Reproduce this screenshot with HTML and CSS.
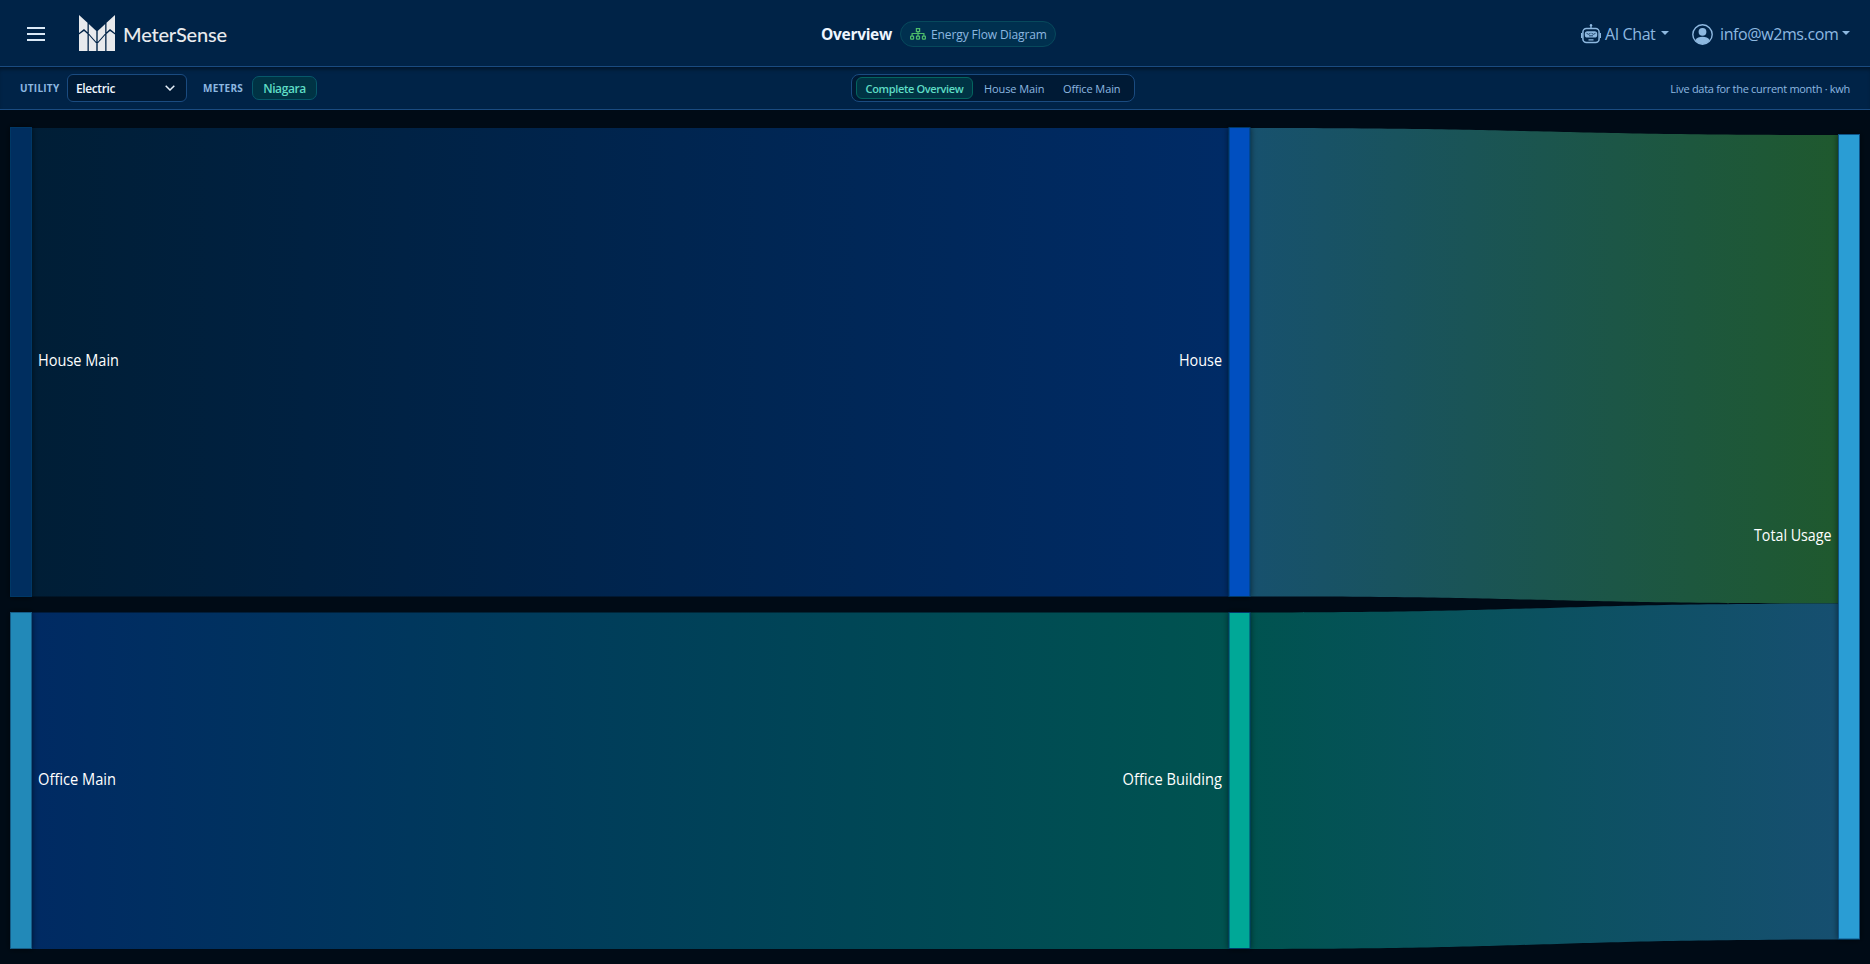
FILE: index.html
```html
<!DOCTYPE html>
<html lang="en">
<head>
    <meta charset="UTF-8">
    <meta name="viewport" content="width=device-width, initial-scale=1.0">
    <title>MeterSense - Overview</title>
    <link rel="stylesheet" href="styles.css">
</head>
<body>
    <header class="navbar">
        <div class="nav-left">
            <svg class="menu-icon" width="18" height="14" viewBox="0 0 18 14"><path d="M0 1h18M0 7h18M0 13h18" stroke="#dbe9f7" stroke-width="2"/></svg>
            <svg class="logo" width="36" height="36" viewBox="0 0 36 36" fill="#e8eaed">
                <path d="M0 0l8.500 7.800v9.500L5 14 0 18z"/>
                <path d="M9.800 9l7.500 7v11l-7.500-8.500z"/>
                <path d="M26.200 9l-7.500 7v11l7.500-8.500z"/>
                <path d="M36 0l-8.500 7.800v9.500L31 14l5 4z"/>
                <path d="M0 19.500L5 16l3.500 3V36H0z"/>
                <path d="M9.800 20l7.500 8.500V36H9.800z"/>
                <path d="M26.200 20l-7.500 8.500V36h7.500z"/>
                <path d="M36 19.500L31 16l-3.500 3V36H36z"/>
            </svg>
            <span class="brand">MeterSense</span>
        </div>
        <div class="nav-center">
            <span class="page-title">Overview</span>
            <span class="page-badge">
                <svg width="16" height="12" viewBox="0 0 16 12" fill="none" stroke="#4dbd6b" stroke-width="1.2"><rect x="6.400" y=".6" width="3.200" height="3"/><rect x=".6" y="8.200" width="3" height="3" rx=".6"/><rect x="6.500" y="8.200" width="3" height="3" rx=".6"/><rect x="12.400" y="8.200" width="3" height="3" rx=".6"/><path d="M8 3.600v4.600M2.100 8.200V5.500h11.800v2.700"/></svg>
                <span class="badge-text">Energy Flow Diagram</span>
            </span>
        </div>
        <div class="nav-right">
            <svg class="robot" width="20" height="20" viewBox="0 0 20 20">
                <rect x="1.900" y="4.500" width="16.200" height="14" rx="3.500" fill="none" stroke="#8db8e0" stroke-width="1.500"/>
                <path d="M10 1v3.500M.6 9v5M19.400 9v5M7.500 15.800h5" stroke="#8db8e0" stroke-width="1.300"/>
                <circle cx="10" cy="1.300" r="1.200" fill="#8db8e0"/>
                <rect x="3.800" y="7.200" width="12.400" height="6.300" rx="2.600" fill="#8db8e0"/>
                <path d="M5.500 9.300l2 1 2-1M10.500 9.300l2 1 2-1M8 11.800h4" fill="none" stroke="#002347" stroke-width=".8"/>
            </svg>
            <span class="nav-text chat">AI Chat</span>
            <span class="caret"></span>
            <svg class="user" width="21" height="21" viewBox="0 0 21 21"><circle cx="10.500" cy="10.500" r="9.700" fill="none" stroke="#8db8e0" stroke-width="1.400"/><circle cx="10.500" cy="7.800" r="3.900" fill="#8db8e0"/><path d="M3.400 16c2.200-4.200 12-4.200 14.200 0-3 5.200-11.200 5.200-14.200 0z" fill="#8db8e0"/></svg>
            <span class="nav-text mail">info@w2ms.com</span>
            <span class="caret"></span>
        </div>
    </header>

    <div class="toolbar">
        <div class="filters">
            <span class="filter-label utility">Utility</span>
            <div class="select">
                <span>Electric</span>
                <svg width="10" height="6" viewBox="0 0 10 6"><path d="M.7.700L5 5 9.300.700" fill="none" stroke="#e6f0fa" stroke-width="1.500"/></svg>
            </div>
            <span class="filter-label meters">Meters</span>
            <span class="meter-pill">Niagara</span>
        </div>
        <div class="tabs">
            <span class="tab active">Complete Overview</span>
            <span class="tab house">House Main</span>
            <span class="tab office">Office Main</span>
        </div>
        <div class="status">Live data for the current month · kwh</div>
    </div>

    <main class="chart">
        <svg width="1870" height="854" viewBox="0 110 1870 854">
            <defs>
                <linearGradient id="link1"><stop offset="0" stop-color="#001e36"/><stop offset="1" stop-color="#002b66"/></linearGradient>
                <linearGradient id="link2"><stop offset="0" stop-color="#002a63"/><stop offset="1" stop-color="#005350"/></linearGradient>
                <linearGradient id="link3"><stop offset="0" stop-color="#17516e"/><stop offset="1" stop-color="#1f592e"/></linearGradient>
                <linearGradient id="link4"><stop offset="0" stop-color="#005350"/><stop offset="1" stop-color="#164f70"/></linearGradient>
                <filter id="glow" filterUnits="userSpaceOnUse" x="0" y="110" width="1870" height="854"><feDropShadow dx="0" dy="0" stdDeviation="3" flood-color="#000a14" flood-opacity=".55"/></filter>
            </defs>
            <!-- links -->
            <path d="M31 128H1230V596.500H31z" fill="url(#link1)"/>
            <path d="M31 612.500H1230V949H31z" fill="url(#link2)"/>
            <path d="M1250 128C1544 128 1544 135 1838 135V603.500C1544 603.500 1544 596.500 1250 596.500z" fill="url(#link3)"/>
            <path d="M1250 612.500C1544 612.500 1544 603.500 1838 603.500V939.500C1544 939.500 1544 949 1250 949z" fill="url(#link4)"/>
            <!-- nodes -->
            <g filter="url(#glow)" stroke="#003866" stroke-width="1">
                <rect x="10.500" y="127.500" width="21" height="469" fill="#002f5e"/>
                <rect x="10.500" y="612.500" width="21" height="336" fill="#2089b8" stroke="#125c86"/>
                <rect x="1229" y="127.500" width="21" height="469" fill="#0050c0"/>
                <rect x="1229" y="612.500" width="21" height="336" fill="#00a897"/>
                <rect x="1838.500" y="134.500" width="21" height="804.500" fill="#2a9dd4" stroke="#0d5287"/>
            </g>
            <!-- labels -->
            <g class="node-label">
                <text x="38" y="365.500" textLength="81" lengthAdjust="spacingAndGlyphs">House Main</text>
                <text x="38" y="784.500" textLength="78" lengthAdjust="spacingAndGlyphs">Office Main</text>
                <text x="1179" y="365.500" textLength="43" lengthAdjust="spacingAndGlyphs">House</text>
                <text x="1122.500" y="784.500" textLength="99.500" lengthAdjust="spacingAndGlyphs">Office Building</text>
                <text x="1754" y="540.500" textLength="77.500" lengthAdjust="spacingAndGlyphs">Total Usage</text>
            </g>
        </svg>
    </main>
</body>
</html>
```
FILE: styles.css
```css
body {
    margin: 0;
    height: 964px;
    overflow: hidden;
    background: #000b16;
    font-family: "Segoe UI", "Open Sans", "Noto Sans", sans-serif;
    color: #8db8e0;
}
svg {
    display: block;
    flex: none;
}
.navbar {
    display: grid;
    grid-template-columns: 821px 1fr auto;
    height: 66px;
    background: #002347;
    border-bottom: 1px solid #1a4b80;
    white-space: nowrap;
}
.nav-left, .nav-center, .nav-right {
    display: flex;
    align-items: center;
}
.nav-left {
    padding-left: 27px;
}
.menu-icon {
    margin-top: 2px;
}
.logo {
    margin-left: 34px;
}
.brand {
    margin: 2px 0 0 8px;
    font-family: Lato, sans-serif;
    font-size: 20px;
    font-weight: 500;
    letter-spacing: -0.2px;
    color: #e8eaed;
}
.page-title {
    width: 71px;
    margin-right: 8px;
    padding-top: 2px;
    font-size: 15.5px;
    font-weight: 700;
    letter-spacing: -0.3px;
    color: #eef6ff;
}
.page-badge {
    display: flex;
    align-items: center;
    gap: 5px;
    box-sizing: border-box;
    width: 156px;
    height: 26px;
    margin-top: 2px;
    padding-left: 9px;
    border: 1px solid #07495c;
    border-radius: 13px;
    background: #00304f;
}
.badge-text {
    font-size: 12px;
    font-weight: 500;
    letter-spacing: -0.1px;
}
.nav-right {
    padding: 2px 20px 0 0;
    font-size: 16px;
}
.nav-text {
    letter-spacing: -0.4px;
}
.robot {
    margin-right: 4px;
}
.chat {
    width: 52px;
}
.mail {
    width: 118px;
}
.user {
    margin: 0 7px 0 23px;
}
.caret {
    margin: -3px 0 0 4px;
    border-top: 4px solid #8db8e0;
    border-left: 4px solid transparent;
    border-right: 4px solid transparent;
}
.toolbar {
    display: grid;
    grid-template-columns: 851px 1fr auto;
    align-items: center;
    height: 42px;
    border-bottom: 1px solid #1a4b80;
    background: #002347;
    box-shadow: inset 0 4px 4px -2px rgba(0, 0, 0, 0.45);
    white-space: nowrap;
}
.filters {
    display: flex;
    align-items: center;
    padding-left: 20px;
}
.filter-label {
    font-size: 10px;
    font-weight: 700;
    letter-spacing: 0.25px;
    text-transform: uppercase;
}
.utility {
    width: 47px;
}
.meters {
    width: 49px;
    margin-left: 16px;
}
.select {
    display: flex;
    align-items: center;
    justify-content: space-between;
    box-sizing: border-box;
    width: 120px;
    height: 28px;
    padding: 0 11px 0 8px;
    border: 1px solid #1a4b80;
    border-radius: 6px;
    background: #001a35;
    color: #eef6ff;
    font-size: 12px;
    font-weight: 600;
    letter-spacing: -0.4px;
}
.meter-pill {
    box-sizing: border-box;
    width: 65px;
    height: 24px;
    border: 1px solid #07586a;
    border-radius: 7px;
    background: #003344;
    color: #5eddc5;
    font-size: 12px;
    font-weight: 600;
    letter-spacing: -0.4px;
    line-height: 23px;
    text-align: center;
}
.tabs {
    display: flex;
    align-items: center;
    box-sizing: border-box;
    width: 284px;
    height: 28px;
    padding-left: 4px;
    border: 1px solid #1a4b80;
    border-radius: 8px;
    background: #001a35;
}
.tab {
    font-size: 11px;
    font-weight: 500;
    letter-spacing: -0.1px;
    line-height: 21px;
}
.active {
    box-sizing: border-box;
    width: 117px;
    height: 22px;
    border: 1px solid #04655f;
    border-radius: 6px;
    background: #003344;
    color: #5eddc5;
    font-weight: 600;
    letter-spacing: -0.35px;
    text-align: center;
}
.house {
    width: 59px;
    margin: 0 20px 0 11px;
}
.status {
    padding-right: 20px;
    font-size: 11px;
    letter-spacing: -0.3px;
}
.node-label {
    fill: #fff;
    font-size: 15.5px;
}
```
